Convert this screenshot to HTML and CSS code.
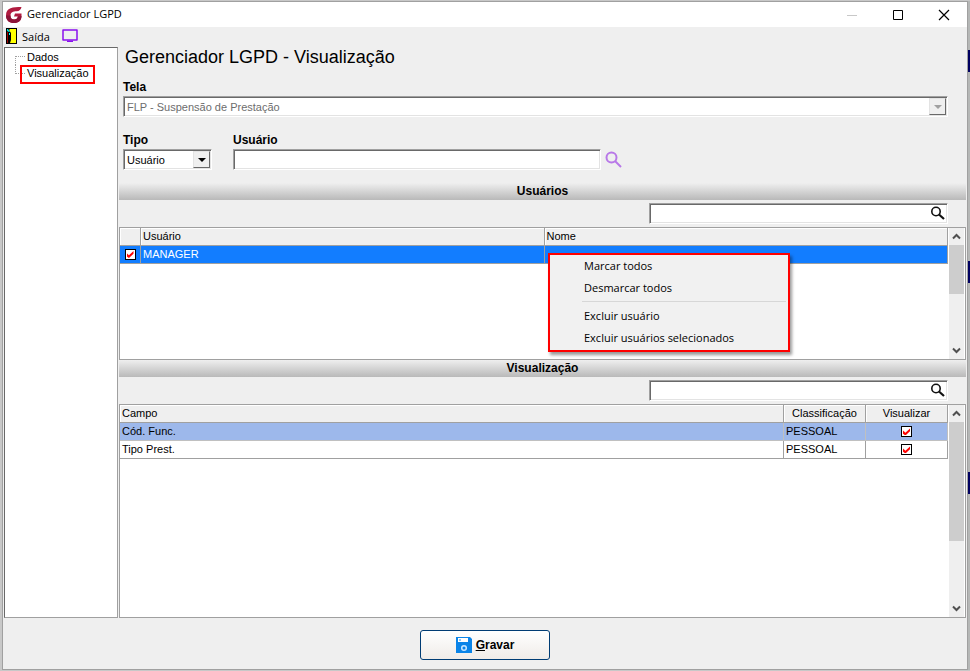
FILE: index.html
```
<!DOCTYPE html>
<html lang="pt-BR">

<head>
    <meta charset="utf-8">
    <title>Gerenciador LGPD</title>
    <link rel="stylesheet" href="styles.css">
</head>

<body>
    <div class="window">
        <header class="titlebar">
            <svg class="logo" viewBox="0 0 16 16">
                <path d="M15.500 0C7 0 0 0.500 0 8.500C0 13.500 3.500 16 8 16C12.500 16 15.500 13.500 15.500 9V6.500H9L8 9.500H11.800C11.500 11.500 10 12.400 8.200 12.400C5.500 12.400 4.500 11 4.500 8.500C4.500 5.200 7 4.200 10.500 4.200C13.500 4.200 15 2.500 15.500 0Z" fill="#b01c40" />
                <path d="M0 8.500C0 13.500 3.500 16 8 16C12.500 16 15.500 13.500 15.500 9L12 9.500C11.500 12 10 12.400 8.200 12.400C5.500 12.400 4.500 11 4.500 8.500Z" fill="#8c1438" />
            </svg>
            <span class="caption">Gerenciador LGPD</span>
            <button class="win-btn" aria-label="Minimizar">
                <svg width="12" height="12"><path d="M1 6.500H11" stroke="#c8c8c8" /></svg>
            </button>
            <button class="win-btn" aria-label="Maximizar">
                <svg width="12" height="12"><path d="M1.500 1.500H10.500V10.500H1.500Z" fill="none" stroke="#000" /></svg>
            </button>
            <button class="win-btn" aria-label="Fechar">
                <svg width="12" height="12"><path d="M1 1L11 11M11 1L1 11" stroke="#000" stroke-width="1.200" /></svg>
            </button>
        </header>

        <nav class="toolbar">
            <button class="tool">
                <svg width="11" height="16">
                    <path d="M0 0H11V16H0Z" fill="#000" />
                    <path d="M4 1H10V15H4L5 12V5L3 2Z" fill="#ff0" />
                    <path d="M1 1H2L4 4H3L1 3Z" fill="#00e0e0" />
                    <path d="M1 4H2V15H1Z" fill="#a00000" />
                    <path d="M3.500 5V7" stroke="#0ff" />
                </svg>
                Saída
            </button>
            <button class="tool" aria-label="Tela">
                <svg width="16" height="14">
                    <path d="M1 1H15V11H1Z" fill="none" stroke="#8a10ee" stroke-width="1.500" stroke-linejoin="round" />
                    <path d="M5 11.500H11V13H5Z" fill="#8a10ee" />
                </svg>
            </button>
        </nav>

        <div class="main">
            <ul class="tree">
                <li class="first"><a href="#">Dados</a></li>
                <li class="last"><a href="#" class="marked">Visualização</a></li>
            </ul>

            <div class="content">
                <form class="filters">
                    <h1>Gerenciador LGPD - Visualização</h1>
                    <label for="tela">Tela</label>
                    <div class="combo disabled">
                        <select id="tela" disabled>
                            <option>FLP - Suspensão de Prestação</option>
                        </select>
                        <span class="arrow"></span>
                    </div>
                    <div class="fields">
                        <div class="field tipo">
                            <label for="tipo">Tipo</label>
                            <div class="combo">
                                <select id="tipo">
                                    <option>Usuário</option>
                                </select>
                                <span class="arrow"></span>
                            </div>
                        </div>
                        <div class="field usuario">
                            <label for="usuario">Usuário</label>
                            <input type="text" id="usuario" class="text">
                        </div>
                        <button type="button" class="find" aria-label="Procurar">
                            <svg width="17" height="17" fill="none" stroke="#b878e8" stroke-width="2">
                                <circle cx="6.500" cy="6.500" r="5" />
                                <path d="M10 10L16 16" />
                            </svg>
                        </button>
                    </div>
                </form>

                <h2>Usuários</h2>
                <div class="search">
                    <input type="text" aria-label="Procurar usuários">
                    <svg width="15" height="15" fill="none" stroke="#111">
                        <circle cx="6" cy="5.500" r="4.200" stroke-width="1.600" />
                        <path d="M9 8.500L14 13" stroke-width="2.200" />
                    </svg>
                </div>
                <div class="grid users">
                    <div class="rows">
                        <table>
                            <colgroup>
                                <col class="c-check">
                                <col>
                                <col>
                            </colgroup>
                            <tr>
                                <th></th>
                                <th>Usuário</th>
                                <th>Nome</th>
                            </tr>
                            <tr class="current">
                                <td class="center"><input type="checkbox" aria-label="MANAGER" checked></td>
                                <td>MANAGER</td>
                                <td></td>
                            </tr>
                        </table>
                        <div class="menu">
                            <button>Marcar todos</button>
                            <button>Desmarcar todos</button>
                            <hr>
                            <button>Excluir usuário</button>
                            <button>Excluir usuários selecionados</button>
                        </div>
                    </div>
                    <div class="scroll">
                        <svg class="up" width="9" height="7"><path d="M1 5.500L4.500 2L8 5.500" /></svg>
                        <div class="thumb"></div>
                        <svg class="down" width="9" height="7"><path d="M1 1.500L4.500 5L8 1.500" /></svg>
                    </div>
                </div>

                <h2>Visualização</h2>
                <div class="search">
                    <input type="text" aria-label="Procurar campos">
                    <svg width="15" height="15" fill="none" stroke="#111">
                        <circle cx="6" cy="5.500" r="4.200" stroke-width="1.600" />
                        <path d="M9 8.500L14 13" stroke-width="2.200" />
                    </svg>
                </div>
                <div class="grid campos">
                    <div class="rows">
                        <table>
                            <colgroup>
                                <col>
                                <col class="c-small">
                                <col class="c-small">
                            </colgroup>
                            <tr>
                                <th>Campo</th>
                                <th class="center">Classificação</th>
                                <th class="center">Visualizar</th>
                            </tr>
                            <tr class="selected">
                                <td>Cód. Func.</td>
                                <td>PESSOAL</td>
                                <td class="center"><input type="checkbox" aria-label="Visualizar Cód. Func." checked></td>
                            </tr>
                            <tr>
                                <td>Tipo Prest.</td>
                                <td>PESSOAL</td>
                                <td class="center"><input type="checkbox" aria-label="Visualizar Tipo Prest." checked></td>
                            </tr>
                        </table>
                    </div>
                    <div class="scroll">
                        <svg class="up" width="9" height="7"><path d="M1 5.500L4.500 2L8 5.500" /></svg>
                        <div class="thumb"></div>
                        <svg class="down" width="9" height="7"><path d="M1 1.500L4.500 5L8 1.500" /></svg>
                    </div>
                </div>
            </div>
        </div>

        <footer>
            <button class="save">
                <svg width="16" height="16">
                    <path d="M0 0H14L16 2V16H0Z" fill="#0a84e8" />
                    <path d="M2 1H12V5H2Z" fill="#fff" />
                    <path d="M3 2H5V4H3Z" fill="#8cc8f8" />
                    <circle cx="8" cy="11" r="2.300" fill="none" stroke="#c8e6ff" stroke-width="1.500" />
                </svg>
                <span><u>G</u>ravar</span>
            </button>
        </footer>
    </div>
    <div class="behind"></div>
</body>

</html>
```

FILE: styles.css
```
* {
    box-sizing: border-box;
}

body {
    display: flex;
    height: 100vh;
    margin: 0;
    padding: 1px 0 1px 2px;
    overflow: hidden;
    background-color: #c8c8c8;
    font-family: "Liberation Sans", Arial, sans-serif;
    font-size: 11px;
    color: #000;
}

button {
    padding: 0;
    border: 0;
    background: none;
    font: inherit;
    color: inherit;
}

.window {
    flex: 1;
    display: flex;
    flex-direction: column;
    min-width: 0;
    border: 1px solid #a0a0a0;
    background-color: #efefef;
}

/* strip of the screen behind the window */
.behind {
    width: 2px;
    background: linear-gradient(#b5b7b6 49px, #000060 49px, #000060 71px, #b5b7b6 71px,
        #b5b7b6 260px, #000060 260px, #000060 282px, #b5b7b6 282px,
        #b5b7b6 471px, #000060 471px, #000060 493px, #b5b7b6 493px);
}

.titlebar {
    display: flex;
    align-items: center;
    height: 25px;
    padding-left: 3px;
    background-color: #fff;
    font-family: "Open Sans", "Segoe UI", sans-serif;
}

.logo {
    width: 16px;
    height: 16px;
    margin-right: 5px;
}

.caption {
    flex: 1;
    padding-bottom: 2px;
}

.win-btn {
    width: 46px;
    height: 25px;
}

.win-btn svg {
    display: block;
    margin: 0 auto;
}

.toolbar {
    display: flex;
    gap: 12px;
    height: 20px;
    padding: 0 0 2px 3px;
    font-family: "Open Sans", "Segoe UI", sans-serif;
}

.tool {
    display: flex;
    align-items: center;
    gap: 5px;
}

.main {
    flex: 1;
    display: flex;
    gap: 1px;
    min-height: 0;
    padding: 0 1px;
}

.tree {
    width: 114px;
    margin: 0;
    padding: 1px 0 0 10px;
    border: 1px solid #a0a0a0;
    border-top-color: #696969;
    border-left-color: #696969;
    background-color: #fff;
    list-style: none;
}

.tree li {
    display: flex;
    height: 16px;
}

.tree li::before {
    content: "";
    width: 9px;
    height: 8px;
    border: 0 dotted #a0a0a0;
}

.tree .first::before {
    align-self: flex-end;
    border-width: 1px 0 0 1px;
}

.tree .last::before {
    border-width: 0 0 1px 1px;
}

.tree a {
    padding-left: 2px;
    line-height: 16px;
    color: #000;
    text-decoration: none;
}

.tree .marked {
    height: 19px;
    margin-left: -5px;
    padding: 0 4px 0 5px;
    border: 2px solid #f00;
    line-height: 13px;
}

.content {
    flex: 1;
    display: flex;
    flex-direction: column;
    min-width: 0;
}

.filters {
    padding: 0 18px 13px 4px;
}

h1 {
    margin: 0;
    padding-left: 2px;
    font-size: 18px;
    line-height: 20px;
    font-weight: normal;
}

label {
    display: block;
    font-size: 12px;
    font-weight: bold;
    line-height: 16px;
}

.filters > label {
    padding-top: 12px;
    margin-bottom: 1px;
}

.combo,
.text,
.search input {
    height: 21px;
    border: 1px solid #fff;
    border-top-color: #a0a0a0;
    border-left-color: #a0a0a0;
    background-color: #fff;
    box-shadow: inset 1px 1px #696969, inset -1px -1px #e3e3e3;
}

.combo {
    display: flex;
    padding: 1px;
}

.combo select {
    flex: 1;
    min-width: 0;
    padding: 0 2px;
    border: 0;
    appearance: none;
    background: none;
    font: inherit;
    color: #000;
}

.combo.disabled select {
    color: #6d6d6d;
    opacity: 1;
}

.arrow {
    display: flex;
    align-items: center;
    justify-content: center;
    width: 17px;
    border: 1px solid #696969;
    border-top-color: #e3e3e3;
    border-left-color: #e3e3e3;
    background-color: #efefef;
}

.arrow::before {
    content: "";
    border: 4px solid transparent;
    border-top-color: #000;
    border-bottom: 0;
}

.disabled .arrow::before {
    border-top-color: #a0a0a0;
}

.fields {
    display: flex;
    align-items: flex-end;
    padding-top: 15px;
}

.field label {
    margin-bottom: 1px;
}

.tipo {
    width: 89px;
    margin-right: 21px;
}

.usuario {
    flex: 0 1 368px;
}

.text {
    display: block;
    width: 100%;
}

.find {
    margin-left: 4px;
}

.find svg {
    display: block;
    margin-bottom: 2px;
}

h2 {
    margin: 0;
    height: 17px;
    background: linear-gradient(#efefef, #b9b9b9);
    font-size: 12px;
    line-height: 17px;
    text-align: center;
}

.search {
    display: grid;
    justify-content: end;
    align-items: center;
    padding: 3px 18px 3px 0;
}

.search input,
.search svg {
    grid-area: 1 / 1;
}

.search input {
    width: 299px;
}

.search svg {
    justify-self: end;
    margin-right: 3px;
}

.grid {
    display: flex;
    min-height: 0;
    border: 1px solid #a0a0a0;
    background-color: #fff;
}

.users {
    flex: 133;
}

.campos {
    flex: 214;
}

.rows {
    flex: 1;
    position: relative;
    min-width: 0;
}

table {
    width: 100%;
    border-collapse: separate;
    border-spacing: 0;
    table-layout: fixed;
}

th,
td {
    height: 18px;
    padding: 0 2px;
    border: 0 solid #a0a0a0;
    border-width: 0 1px 1px 0;
    line-height: 17px;
    text-align: left;
    font-weight: normal;
}

th {
    background-color: #efefef;
    box-shadow: inset 1px 1px #fff;
}

.center {
    text-align: center;
}

.c-check {
    width: 21px;
}

.c-small {
    width: 82px;
}

.current td {
    background-color: #127dff;
    color: #fff;
}

.selected td {
    background-color: #9db8eb;
    border-color: #c0c0c0;
}

input[type="checkbox"] {
    display: block;
    width: 11px;
    height: 11px;
    margin: 0 auto;
    border: 1px solid #000;
    appearance: none;
    background-color: #fff;
}

input[type="checkbox"]:checked::before {
    content: "";
    display: block;
    width: 7px;
    height: 7px;
    margin: 1px;
    background-color: #f00;
    clip-path: polygon(0 30%, 35% 60%, 100% 0, 100% 40%, 35% 100%, 0 75%);
}

.scroll {
    display: flex;
    flex-direction: column;
    align-items: center;
    width: 17px;
    padding: 0 1px;
    background-color: #efefef;
    background-clip: content-box;
}

.scroll svg {
    margin: 5px 0;
    fill: none;
    stroke: #505050;
    stroke-width: 2;
}

.scroll .down {
    margin-top: auto;
}

.thumb {
    width: 15px;
    height: 49px;
    background-color: #cdcdcd;
}

.campos .thumb {
    height: 119px;
}

.menu {
    position: absolute;
    top: 25px;
    left: 428px;
    width: 242px;
    padding: 0 2px 1px 0;
    border: 2px solid #f00;
    background-color: #f1f1f1;
    box-shadow: 2px 3px 3px rgba(0, 0, 0, 0.4);
    font-family: "Open Sans", "Segoe UI", sans-serif;
}

.menu button {
    display: block;
    width: 100%;
    height: 22px;
    padding: 0 0 2px 34px;
    text-align: left;
}

.menu hr {
    height: 1px;
    margin: 2px 0 3px 32px;
    border: 0;
    background-color: #d7d7d7;
}

footer {
    display: flex;
    align-items: center;
    justify-content: center;
    height: 51px;
    padding-top: 2px;
}

.save {
    display: flex;
    align-items: center;
    justify-content: center;
    gap: 4px;
    width: 130px;
    height: 30px;
    border: 1px solid #003c74;
    border-radius: 3px;
    background: linear-gradient(#fff, #f0ece8);
    font-size: 12px;
    font-weight: bold;
}
```
